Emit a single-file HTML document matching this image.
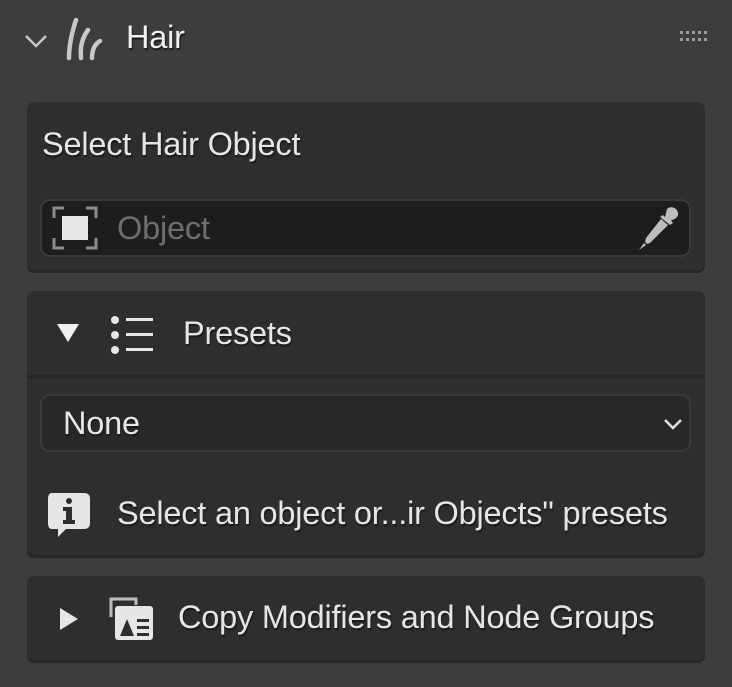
<!DOCTYPE html>
<html><head><style>
*{margin:0;padding:0;box-sizing:border-box}
body{width:732px;height:687px;background:#3d3d3d;font-family:"Liberation Sans",sans-serif;color:#e6e6e6;position:relative;overflow:hidden}
.a{position:absolute}
.panel{position:absolute;left:27px;width:678px;background:#2e2e2e;border-radius:7px;box-shadow:0 3px 0 #262626}
.t{position:absolute;font-size:32.5px;white-space:nowrap;text-shadow:1px 2px 1px #1a1a1a;letter-spacing:-0.2px}
.field{position:absolute;left:40px;width:651px;height:58px;background:#1d1d1d;border:2px solid #3a3a3a;border-radius:10px}
</style></head><body>
<svg class="a" style="left:22px;top:28px" width="30" height="24" viewBox="0 0 30 24"><path d="M4 8 L14 18 L24 8" fill="none" stroke="#c8c8c8" stroke-width="2.5"/></svg>
<svg class="a" style="left:64px;top:16px" width="52" height="46" viewBox="0 0 52 46"><g fill="none" stroke="#c8c8c8" stroke-width="4.5" stroke-linecap="round"><path d="M12 4 C8 16 5 30 5 42"/><path d="M24 14 C18 22 16 32 17 42"/><path d="M36 25 C31 28 28 34 28 42"/></g></svg>
<div class="t" style="left:126px;top:19px;color:#f0f0f0">Hair</div>
<svg class="a" style="left:680px;top:31px" width="30" height="14"><g fill="#9a9a9a"><rect x="0" y="0" width="3" height="3"/><rect x="6" y="0" width="3" height="3"/><rect x="12" y="0" width="3" height="3"/><rect x="18" y="0" width="3" height="3"/><rect x="24" y="0" width="3" height="3"/><rect x="0" y="7" width="3" height="3"/><rect x="6" y="7" width="3" height="3"/><rect x="12" y="7" width="3" height="3"/><rect x="18" y="7" width="3" height="3"/><rect x="24" y="7" width="3" height="3"/></g></svg>

<div class="panel" style="top:102px;height:168px"></div>
<div class="t" style="left:42px;top:126px">Select Hair Object</div>
<div class="field" style="top:199px"></div>
<svg class="a" style="left:52px;top:206px" width="46" height="44" viewBox="0 0 46 44"><g fill="none" stroke="#8c8c8c" stroke-width="3"><path d="M2 12 V2 H12"/><path d="M34 2 H44 V12"/><path d="M2 32 V42 H12"/><path d="M34 42 H44 V32"/></g><rect x="10" y="10" width="26" height="24" fill="#e8e8e8"/></svg>
<div class="t" style="left:117px;top:210px;color:#6e6e6e;text-shadow:none">Object</div>
<svg class="a" style="left:636px;top:206px" width="46" height="44" viewBox="0 0 46 44"><g fill="#bdbdbd"><path d="M31 3 C35 -1 43 2 42 9 C41 12 38 14 35 14 L37 17 L34 19 L24 11 L27 9 L29 11 Z"/><path d="M25 13 L32 19 L14 37 L11 38 L9 36 L10 32 Z"/><path d="M8 37 L3 44 L10 39 Z"/></g></svg>

<div class="panel" style="top:291px;height:264px"></div>
<div class="a" style="left:27px;top:375px;width:678px;height:3px;background:#262626"></div>
<svg class="a" style="left:55px;top:322px" width="26" height="22"><path d="M2 2 H24 L13 20 Z" fill="#f0f0f0"/></svg>
<svg class="a" style="left:108px;top:313px" width="48" height="44"><g fill="#e6e6e6"><circle cx="7" cy="7" r="4"/><circle cx="7" cy="22" r="4"/><circle cx="7" cy="37" r="4"/><rect x="18" y="5" width="27" height="3"/><rect x="18" y="20" width="27" height="3"/><rect x="18" y="35" width="27" height="3"/></g></svg>
<div class="t" style="left:183px;top:315px">Presets</div>
<div class="field" style="top:394px;background:#282828"></div>
<div class="t" style="left:63px;top:405px">None</div>
<svg class="a" style="left:662px;top:416px" width="22" height="16"><path d="M3 4 L11 12 L19 4" fill="none" stroke="#e0e0e0" stroke-width="2.5"/></svg>
<svg class="a" style="left:46px;top:491px" width="46" height="48" viewBox="0 0 46 48"><path d="M6 2 H38 Q44 2 44 8 V32 Q44 38 38 38 H20 L12 46 L12 38 H6 Q2 38 2 32 V8 Q2 2 6 2 Z" fill="#e6e6e6"/><circle cx="23" cy="10" r="3" fill="#2e2e2e"/><path d="M17 16 H26 V29 H29 V33 H17 V29 H20 V20 H17 Z" fill="#2e2e2e"/></svg>
<div class="t" style="left:117px;top:495px">Select an object or...ir Objects" presets</div>

<div class="panel" style="top:576px;height:84px"></div>
<svg class="a" style="left:58px;top:606px" width="22" height="26"><path d="M2 2 L20 13 L2 24 Z" fill="#e6e6e6"/></svg>
<svg class="a" style="left:108px;top:595px" width="48" height="48" viewBox="0 0 48 48"><path d="M3 22 V4 H28 V10" fill="none" stroke="#bdbdbd" stroke-width="3"/><rect x="7" y="11" width="38" height="34" rx="3" fill="#e6e6e6"/><path d="M12 41 L19 24 L26 41 Z" fill="#2e2e2e"/><rect x="29" y="24" width="12" height="3" fill="#2e2e2e"/><rect x="29" y="31" width="12" height="3" fill="#2e2e2e"/><rect x="29" y="38" width="12" height="3" fill="#2e2e2e"/></svg>
<div class="t" style="left:178px;top:599px">Copy Modifiers and Node Groups</div>
</body></html>
